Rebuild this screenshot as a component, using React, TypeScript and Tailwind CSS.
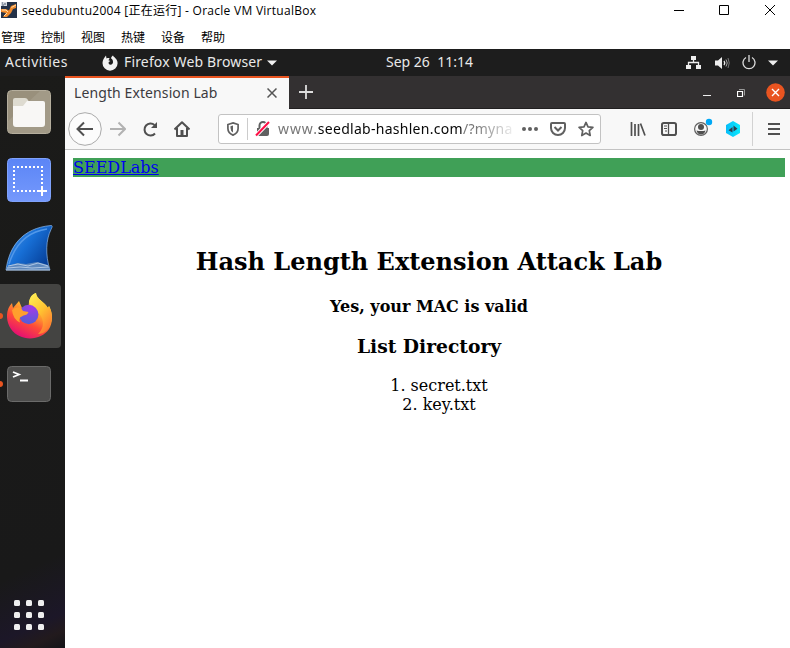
import React from "react";

const ui = "font-['Noto_Sans','Open_Sans',sans-serif]";
const win = "font-['Open_Sans','Noto_Sans_CJK_SC',sans-serif]";

type IconProps = { w: number; h: number; className?: string; children: React.ReactNode };

function Icon({ w, h, className = "", children }: IconProps) {
  return (
    <svg width={w} height={h} viewBox={`0 0 ${w} ${h}`} fill="none" className={`shrink-0 ${className}`}>
      {children}
    </svg>
  );
}

function TitleBar() {
  return (
    <div className={`flex h-[25px] items-start ${win}`}>
      <Icon w={16} h={16} className="mt-[2px] ml-px">
        <rect width="16" height="16" fill="#243248" />
        <path d="M0 0h6v4H0z" fill="#d5d9df" />
        <path d="M1 1h1M3 2h2M1 3h2" stroke="#536074" />
        <path d="M0 7h5l3 1.500L10 4l5-2v4l-3 1-2 4-4 4H2l3-4-5-1z" fill="#f08a2c" />
        <path d="M1 8h4l2 2M10.500 5.500L15 3M3 14l3-3" stroke="#ffdfad" />
      </Icon>
      <span className="mt-px ml-[5px] w-[300px] text-[12px] leading-[19px] tracking-[0.27px] whitespace-pre text-black">seedubuntu2004 [正在运行] - Oracle VM VirtualBox</span>
      <Icon w={10} h={10} className="mt-[5px] ml-[352px]"><path d="M0 5.5h10" stroke="#000" /></Icon>
      <Icon w={10} h={10} className="mt-[5px] ml-[35px]"><path d="M.5.5h9v9h-9z" stroke="#000" /></Icon>
      <Icon w={10} h={10} className="mt-[5px] ml-[36px]"><path d="M0 0l10 10M10 0L0 10" stroke="#000" /></Icon>
    </div>
  );
}

function MenuBar() {
  return (
    <div className={`flex h-6 gap-4 pt-px pl-px text-[12px] leading-[24px] text-black ${win}`}>
      {["管理", "控制", "视图", "热键", "设备", "帮助"].map((m) => <span key={m} className="w-6">{m}</span>)}
    </div>
  );
}

function SystemBar() {
  return (
    <div className={`flex h-[27px] items-center bg-[#1d1d1d] text-[14px] text-[#e9e9e9] ${ui}`}>
      <span className="mb-[3px] ml-[5px] w-[97px] tracking-[0.45px]">Activities</span>
      <Icon w={16} h={16}>
        <path d="M4 .5l.5 3C6 2.8 7 3 7.600 3.500L6.400 5.300l2 .7-1.700 1c-.4 1.700.5 2.700 1.700 2.700 1.800 0 2.800-1.500 2.600-3C10.800 4.500 10 4 9 3.600c.2-1.600 1-2.500 2-3.100.2 1.500 4.600 3 4.600 7.700A7.500 7.500 0 0 1 .5 8C.5 5 2.200 3 4 .5z" fill="#f2f2f2" />
      </Icon>
      <span className="mb-[3px] ml-[6px] w-[138px] tracking-[0.15px] whitespace-nowrap">Firefox Web Browser</span>
      <Icon w={10} h={6} className="ml-[5px]"><path d="M0 .5h10L5 5.500z" fill="#f2f2f2" /></Icon>
      <span className="mb-[3px] ml-[109px] w-[88px] whitespace-pre">Sep 26  11:14</span>
      <Icon w={16} h={14} className="ml-[212px]">
        <path d="M5 0h5v4H5zM0 9h5v4H0zM10 9h5v4h-5z" fill="#eee" />
        <path d="M7.500 4v3M2.500 9V6.500h10V9" stroke="#eee" strokeWidth="1.300" />
      </Icon>
      <Icon w={15} h={14} className="ml-[13px]">
        <path d="M0 4.500h3L7 1v12L3 9.500H0z" fill="#eee" />
        <path d="M9 5q1.500 2 0 4" stroke="#eee" strokeWidth="1.300" />
        <path d="M11 3.500q2.500 3.500 0 7" stroke="#aaa" /><path d="M13 2q2.500 5 0 10" stroke="#777" />
      </Icon>
      <Icon w={14} h={15} className="mb-px ml-[12px]">
        <path d="M4 2.500a6 6 0 1 0 6 0M7 0v7" stroke="#ddd" strokeWidth="1.300" />
      </Icon>
      <Icon w={10} h={6} className="ml-[12px]"><path d="M0 .5h10L5 5.500z" fill="#eee" /></Icon>
    </div>
  );
}

function Dock() {
  return (
    <div className="flex w-[65px] shrink-0 flex-col bg-[linear-gradient(155deg,#1b1b19_0%,#191919_84%,#1c1728_94%,#221a1d_97%,#141418_100%)]">
      <Icon w={44} h={44} className="mt-[14px] ml-[7px]">
        <rect x=".5" y=".5" width="43" height="43" rx="4" fill="#99907c" stroke="#b5ae9d" />
        <path d="M0 32L33 1h7q3 0 3 3v36q0 3-3 3H4q-3 0-3-3z" fill="#aaa28f" opacity=".55" />
        <path d="M6 10q0-2 2-2h10q2 0 3 2l1 2v9H6z" fill="#dedbd0" />
        <path d="M6 16h10l4-5h16q2 0 2 2v21q0 3-3 3H9q-3 0-3-3z" fill="#f8f7f5" />
      </Icon>
      <Icon w={44} h={44} className="mt-[24px] ml-[7px]">
        <defs><linearGradient id="shot" x1="0" x2="0" y1="0" y2="1"><stop stopColor="#5b85f6" /><stop offset="1" stopColor="#7599fc" /></linearGradient></defs>
        <rect x=".5" y=".5" width="43" height="43" rx="4" fill="url(#shot)" stroke="#7fa2fb" />
        <path d="M6 9h30M6 33h24" stroke="#fff" strokeWidth="2" strokeDasharray="2 2" />
        <path d="M7 8v26M35 8v20" stroke="#fff" strokeWidth="2" strokeDasharray="2 2" />
        <path d="M35 28v10M30 33h10" stroke="#fff" strokeWidth="2" />
      </Icon>
      <Icon w={48} h={46} className="mt-[23px] ml-[5px]">
        <defs><linearGradient id="fin" x1="0" x2="1" y1="0" y2=".7"><stop stopColor="#5097e4" /><stop offset=".5" stopColor="#176fd6" /><stop offset="1" stopColor="#063f98" /></linearGradient></defs>
        <path d="M1 45C4 22 17 3 46 .5c2 0 1 2 0 4-5 10-6 25-1 40.500z" fill="url(#fin)" stroke="#8db9ed" strokeWidth=".7" />
        <path d="M4 39C10 20 21 7 42 4" stroke="#5298e9" strokeWidth="1.500" />
        <path d="M3 41l9-3 9 1 11-2 11 3 2 5H1z" fill="#5d88bd" />
        <path d="M3 41l10-2 10 2 10-3 10 3M2 43l13-1 12 1 17-1M1 45h44" stroke="#c1d5ee" strokeWidth=".8" />
      </Icon>
      <div className="mt-[13px] flex h-16 w-[61px] items-center rounded-r-[4px] bg-[#444442]">
        <Icon w={3} h={6}><circle cx="0" cy="3" r="3" fill="#e95420" /></Icon>
        <Icon w={46} h={48} className="ml-[4px]">
          <defs>
            <linearGradient id="fox" x1=".8" x2=".3" y1=".05" y2="1"><stop stopColor="#fff44f" /><stop offset=".35" stopColor="#ffb62c" /><stop offset=".65" stopColor="#ff4b38" /><stop offset="1" stopColor="#e30a78" /></linearGradient>
            <linearGradient id="flame" x1="0" x2=".6" y1="0" y2="1"><stop stopColor="#fff45a" /><stop offset=".55" stopColor="#ffc331" /><stop offset="1" stopColor="#ff7c32" /></linearGradient>
            <radialGradient id="globe" cx=".65" cy=".15" r=".8"><stop stopColor="#a43be6" /><stop offset="1" stopColor="#5a5bd8" /></radialGradient>
          </defs>
          <path d="M5 11l1 5 6-7 3 7 7-1C21 9 24 3 29 1c0 6 9 9 12 15l1-2c5 9 3 18 0 23-8 12-29 13-38 0C-2 28-1 17 5 11z" fill="url(#fox)" />
          <path d="M22 10c1-5 3-8 7-9 0 6 9 9 12 15l1-2c5 10 3 18-2 24-3 3-6 4-9 4 6-6 6-12 3-18-3-5-9-8-12-14z" fill="url(#flame)" />
          <circle cx="21.700" cy="22.500" r="9.700" fill="url(#globe)" />
          <path d="M5 18q4-4 9-2l2 3 5.500 1q-1 3-5 3.500l-3.500 2q-1.500 3 0 5-7-3-8-12.500z" fill="#ff9f2d" />
        </Icon>
      </div>
      <div className="mt-[18px] flex items-center">
        <Icon w={3} h={6}><circle cx="0" cy="3" r="3" fill="#e95420" /></Icon>
        <Icon w={44} h={36} className="ml-[4px]">
          <rect x=".5" y=".5" width="43" height="35" rx="4" fill="#4d4d4c" stroke="#6b6b6a" />
          <path d="M6 6l6 2.500L6 11M13 14.500h8" stroke="#fff" strokeWidth="1.800" />
        </Icon>
      </div>
      <div className="mt-auto mb-[18px] ml-[14px] grid w-[30px] grid-cols-3 gap-[6px]">
        {Array.from({ length: 9 }, (_, i) => <i key={i} className="h-[6px] w-[6px] rounded-[1.500px] bg-[#efefef]" />)}
      </div>
    </div>
  );
}

function TabStrip() {
  return (
    <div className={`flex h-[33px] border-b border-[#211f20] bg-[#333031] ${ui}`}>
      <div className="-mb-px flex h-[33px] w-[224px] items-center border-t-2 border-[#e95420] bg-[#f8f8f8] text-[14px] text-[#3c3b40]">
        <span className="mb-[2px] ml-[9px] w-[144px] tracking-[0.1px] whitespace-nowrap">Length Extension Lab</span>
        <Icon w={10} h={10} className="mb-px ml-[49px]"><path d="M.5.500l9 9M9.500.500l-9 9" stroke="#555" strokeWidth="1.500" /></Icon>
      </div>
      <div className="flex flex-1 items-center">
        <Icon w={14} h={14} className="ml-[10px]"><path d="M7 0v14M0 7h14" stroke="#ddd" strokeWidth="1.800" /></Icon>
        <Icon w={8} h={8} className="mt-[4px] ml-[390px]"><path d="M0 5.500h8" stroke="#eee" strokeWidth="1" /></Icon>
        <Icon w={9} h={9} className="mt-[2px] ml-[26px]"><path d="M.5 2.500h5v5h-5z" stroke="#fff" strokeWidth="1.200" /><path d="M2 .500h5.500v6" stroke="#999" /></Icon>
        <Icon w={19} h={19} className="mt-[1px] ml-[19.500px]"><circle cx="9.500" cy="9.500" r="9.300" fill="#e95420" /><path d="M6 6l7 7M13 6l-7 7" stroke="#fff" strokeWidth="1.400" /></Icon>
      </div>
    </div>
  );
}

function Toolbar() {
  return (
    <div className={`flex h-[41px] items-center border-b border-[#c3c3c3] bg-[#f8f8f8] ${ui}`}>
      <Icon w={34} h={34} className="ml-[3px]">
        <circle cx="17" cy="17" r="16.300" fill="#fcfcfc" stroke="#aaa" />
        <path d="M25 17H10M16 10.500L9.500 17l6.500 6.500" stroke="#505050" strokeWidth="2" />
      </Icon>
      <Icon w={16} h={16} className="ml-[8px]"><path d="M0 8h14M8.500 1.500L15 8l-6.500 6.500" stroke="#b2b2b2" strokeWidth="2" /></Icon>
      <Icon w={16} h={16} className="ml-[16px]"><path d="M13 12.500A6 6 0 1 1 12.500 4" stroke="#505050" strokeWidth="2" /><path d="M15 1v6H9z" fill="#505050" /></Icon>
      <Icon w={16} h={16} className="ml-[16px]"><path d="M.5 8.500L8 1.300l7.500 7.200M3 7v8h10V7" stroke="#505050" strokeWidth="2" strokeLinejoin="round" /><path d="M6.500 9h3v6h-3z" fill="#505050" /></Icon>
      <div className="ml-[28px] flex h-[30px] w-[383px] items-center rounded-[3px] border border-[#c3c3c3] bg-white">
        <Icon w={12} h={14} className="ml-[8px]"><path d="M6 .9l5.100 1.600v4Q11.100 11 6 13.100.9 11 .9 6.500v-4z" stroke="#606060" strokeWidth="1.700" /><path d="M6 3.500v7Q3.500 9 3.500 6V4.300z" fill="#606060" /></Icon>
        <i className="ml-[8px] h-[22px] w-px bg-[#ccc]" />
        <Icon w={16} h={16} className="ml-[7px]"><path d="M4.500 7V4.500a3.500 3.500 0 0 1 7 0V7" stroke="#606060" strokeWidth="2" /><path d="M2 7h12v6q0 2-2 2H2z" fill="#606060" /><path d="M.5 15L14 1" stroke="#fff" strokeWidth="4" /><path d="M1 14.500L14 1" stroke="#ff0f45" strokeWidth="2" /></Icon>
        <div className="ml-[7px] w-[235px] [mask-image:linear-gradient(to_right,#000_84%,transparent_102%)] text-[14px] leading-5 tracking-[0.28px] whitespace-nowrap text-[#777]"><span className="tracking-[0.9px]">www.</span><span className="text-[#080808]">seedlab-hashlen.com</span>/?myna</div>
        <Icon w={16} h={4} className="ml-[9px]"><circle cx="2" cy="2" r="2" fill="#606060" /><circle cx="8" cy="2" r="2" fill="#606060" /><circle cx="14" cy="2" r="2" fill="#606060" /></Icon>
        <Icon w={16} h={14} className="ml-[12px]"><path d="M1 2q0-1 1-1h12q1 0 1 1v4a7 7 0 0 1-14 0z" stroke="#606060" strokeWidth="2" /><path d="M4.500 5L8 8.500 11.500 5" stroke="#606060" strokeWidth="2" /></Icon>
        <Icon w={16} h={16} className="ml-[12px]"><path d="M8 1.400l2 4.400 4.900.6-3.600 3.300.9 4.800L8 12.100l-4.200 2.400.9-4.800L1.100 6.400 6 5.800z" stroke="#606060" strokeWidth="1.700" strokeLinejoin="round" /></Icon>
      </div>
      <Icon w={16} h={14} className="ml-[29px]"><path d="M1.500 0v14M5 2v12M8.500 2v12M10.500 1.500L15 13.500" stroke="#505050" strokeWidth="1.700" /></Icon>
      <Icon w={16} h={14} className="ml-[15px]"><rect x="1" y="1" width="14" height="12" rx="1.800" stroke="#505050" strokeWidth="2" /><path d="M7.500 1v12" stroke="#505050" strokeWidth="1.300" /><path d="M3 4h3M3 6.500h3M4 9h2" stroke="#505050" /></Icon>
      <Icon w={20} h={20} className="mb-[6px] ml-[17px]">
        <circle cx="7" cy="13" r="6.400" stroke="#606060" strokeWidth="1.200" /><circle cx="7" cy="11" r="3" fill="#505050" /><path d="M2.500 14.500q2 .5 4.500.5t4.500-.5q-1 4-4.500 4t-4.500-4z" fill="#505050" /><circle cx="15" cy="6" r="3.200" fill="#00a8f5" />
      </Icon>
      <Icon w={16} h={16} className="ml-[11px]">
        <defs><linearGradient id="hex" x1="0" x2="1"><stop stopColor="#08bcf8" /><stop offset="1" stopColor="#08eafd" /></linearGradient></defs>
        <path d="M8 0l7 4v8l-7 4-7-4V4z" fill="url(#hex)" /><path d="M3.500 9.200L7.500 6v5.500zM8.500 4.500l4 3.200-4 2.800z" fill="#2f4150" />
      </Icon>
      <i className="ml-[11px] h-[34px] w-px bg-[#d2d2d2]" />
      <Icon w={12} h={14} className="ml-[15px]"><path d="M0 2h12M0 7h12M0 12h12" stroke="#505050" strokeWidth="1.800" /></Icon>
    </div>
  );
}

function Page() {
  return (
    <div className="flex-1 bg-white pt-2 pr-[5px] pl-2 font-['DejaVu_Serif',serif] text-[16px] leading-[19px] text-black">
      <div className="h-[19px] bg-[#40a057]"><a className="text-[#0000ee] underline" href="#">SEEDLabs</a></div>
      <div className="text-center">
        <h1 className="mt-[71px] text-[24px] leading-[28px] font-bold">Hash Length Extension Attack Lab</h1>
        <p className="mt-[21px] font-bold">Yes, your MAC is valid</p>
        <h3 className="mt-[19px] text-[18.720px] leading-[22px] font-bold">List Directory</h3>
        <ol className="mt-[19px] pl-5">
          <li>1. secret.txt</li>
          <li>2. key.txt</li>
        </ol>
      </div>
    </div>
  );
}

export default function App() {
  return (
    <div className="flex h-[648px] w-[790px] flex-col overflow-hidden bg-white">
      <TitleBar />
      <MenuBar />
      <SystemBar />
      <div className="flex min-h-0 flex-1">
        <Dock />
        <div className="flex min-w-0 flex-1 flex-col">
          <TabStrip />
          <Toolbar />
          <Page />
        </div>
      </div>
    </div>
  );
}
